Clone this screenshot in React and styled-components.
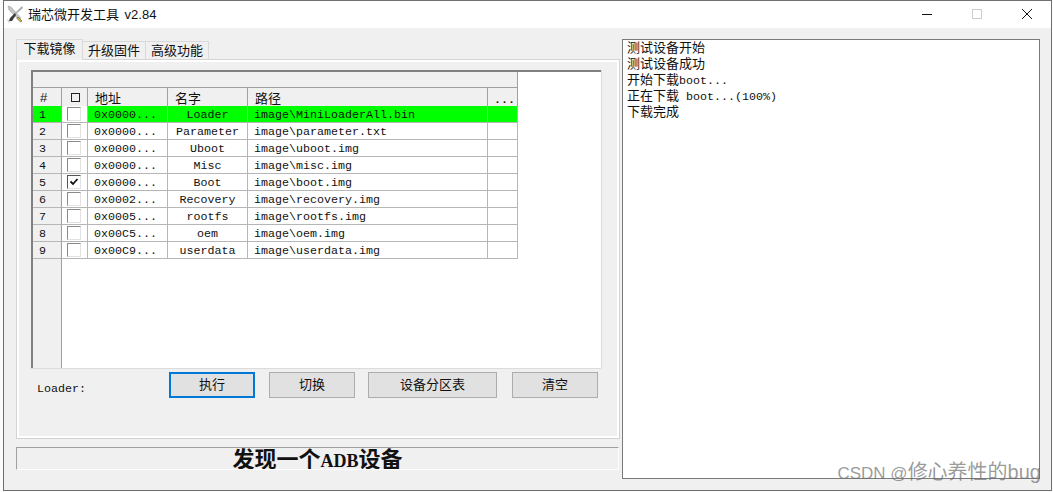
import styled, { createGlobalStyle } from "styled-components";

const GlobalStyle = createGlobalStyle`
  html, body { margin: 0; padding: 0; background: #fbfbfb; }
  body { width: 1053px; height: 492px; overflow: hidden; font-family: "Liberation Sans", "Noto Sans CJK SC", sans-serif; }
`;

const Win = styled.div`
  position: relative;
  box-sizing: border-box;
  margin-left: 3px;
  width: 1049px;
  height: 491px;
  border: 1px solid #6f6f6f;
  background: #f0f0f0;
  display: flex;
  flex-direction: column;
`;

const TitleBar = styled.div`
  box-sizing: border-box;
  height: 27px;
  flex: none;
  background: #fff;
  display: flex;
  align-items: center;
  padding: 0 0 2px 3px;
  color: #111;
  font-size: 13px;
`;

const TitleText = styled.span`
  margin-left: 5px;
  flex: 1;
  word-spacing: 2px;
`;

const WinButton = styled.div`
  box-sizing: border-box;
  width: 50px;
  padding-left: 2px;
  display: flex;
  justify-content: center;
`;

const Body = styled.div`
  flex: 1;
  display: flex;
  padding: 11px 11px 0 12px;
  gap: 2px;
`;

const LeftCol = styled.div`
  width: 604px;
  display: flex;
  flex-direction: column;
`;

const Tabs = styled.div`
  display: flex;
  height: 20px;
  align-items: flex-end;
`;

const Tab = styled.div`
  box-sizing: border-box;
  width: ${(p) => p.$w}px;
  height: ${(p) => (p.$active ? 21 : 18)}px;
  margin-bottom: ${(p) => (p.$active ? -1 : 0)}px;
  background: #f0f0f0;
  border: 1px solid #d9d9d9;
  border-bottom: none;
  border-left: ${(p) => (p.$active ? "1px solid #d9d9d9" : "none")};
  text-align: center;
  font-size: 13px;
  line-height: ${(p) => (p.$active ? 18 : 17)}px;
  color: #111;
  position: relative;
  z-index: ${(p) => (p.$active ? 1 : 0)};
`;

const Panel = styled.div`
  box-sizing: border-box;
  height: 380px;
  border: 1px solid #d4d4d4;
  box-shadow: inset 0 0 0 2px #fff;
  padding: 10px 16px 0 14px;
  display: flex;
  flex-direction: column;
`;

const GridBox = styled.div`
  box-sizing: border-box;
  height: 298px;
  width: 570px;
  background: #fff;
  border-top: 2px solid #808080;
  border-left: 2px solid #808080;
  display: flex;
  flex-direction: column;
  box-shadow: 0 1px 0 #dcdcdc, 1px 0 0 #dcdcdc;
`;

const TopBand = styled.div`
  box-sizing: border-box;
  height: 16px;
  width: 485px;
  flex: none;
  background: #f0f0f0;
  border-bottom: 1px solid #a0a0a0;
  border-right: 1px solid #a0a0a0;
`;

const Row = styled.div`
  display: grid;
  grid-template-columns: 29px 26px 80px 80px 240px 30px;
  width: 485px;
  height: 17px;
  margin-bottom: ${(p) => (p.$head ? 1 : 0)}px;
  flex: none;
`;

const HeadCell = styled.div`
  box-sizing: border-box;
  background: #f0f0f0;
  border-right: 1px solid #a0a0a0;
  border-bottom: 1px solid #a0a0a0;
  padding: 0 0 2px ${(p) => p.$pad ?? 7}px;
  display: flex;
  align-items: center;
  font-size: 13px;
  color: #111;
`;

const HeadBox = styled.span`
  width: 7px;
  height: 7px;
  margin-left: 2px;
  border: 1px solid #222;
`;

const Dots = styled.span`
  font-family: "Liberation Mono", monospace;
  font-size: 11.67px;
  margin-top: 4px;
  font-weight: bold;
`;

const Cell = styled.div`
  box-sizing: border-box;
  background: ${(p) => p.$bg};
  border-right: 1px solid ${(p) => p.$line || "#b6b6b6"};
  border-bottom: 1px solid #b6b6b6;
  font-family: "Liberation Mono", monospace;
  font-size: 11.67px;
  line-height: 18px;
  color: #111;
  white-space: nowrap;
  overflow: hidden;
  padding: 0 6px;
  text-align: ${(p) => p.$align || "left"};
`;

const CheckCell = styled(Cell)`
  padding: 1px 0 0 5px;
`;

const Check = styled.span`
  box-sizing: border-box;
  display: block;
  width: 14px;
  height: 14px;
  background: #fff;
  border: 1px solid #e2e2e2;
  border-top-color: ${(p) => (p.$on ? "#555" : "#8a8a8a")};
  border-left-color: ${(p) => (p.$on ? "#555" : "#8a8a8a")};
`;

const FixedFill = styled.div`
  flex: 1;
  width: 28px;
  background: #f0f0f0;
  border-right: 1px solid #a0a0a0;
`;

const ActionRow = styled.div`
  display: flex;
  align-items: flex-start;
  margin-top: 4px;
  padding-left: 6px;
`;

const LoaderLabel = styled.span`
  width: 132px;
  font-family: "Liberation Mono", monospace;
  font-size: 11.67px;
  line-height: 16px;
  padding-top: 9px;
  color: #111;
`;

const Btn = styled.button`
  box-sizing: border-box;
  height: 26px;
  width: ${(p) => p.$w}px;
  margin-left: ${(p) => p.$gap || 0}px;
  padding: 0 0 4px;
  background: #e1e1e1;
  border: ${(p) => (p.$focus ? "2px solid #0078d7" : "1px solid #adadad")};
  border-radius: 0;
  font-family: "Liberation Sans", "Noto Sans CJK SC", sans-serif;
  font-size: 13px;
  color: #111;
`;

const StatusBar = styled.div`
  box-sizing: border-box;
  margin-top: 8px;
  width: 603px;
  height: 23px;
  border-top: 1px solid #a0a0a0;
  border-left: 1px solid #a0a0a0;
  border-right: 1px solid #fff;
  border-bottom: 1px solid #fff;
  overflow: hidden;
  text-align: center;
  font-family: "Liberation Serif", "Noto Sans CJK SC", serif;
  font-weight: bold;
  font-size: 22px;
  line-height: 24px;
  color: #111;
`;

const StatusLatin = styled.span`
  font-size: 18px;
`;

const LogBox = styled.div`
  box-sizing: border-box;
  width: 418px;
  height: 440px;
  background: #fff;
  border: 1px solid #7a7a7a;
  padding: 0 4px;
  font-size: 13px;
  color: #111;
`;

const LogLine = styled.div`
  height: 16px;
  line-height: 16px;
  white-space: pre;
`;

const Mono = styled.span`
  font-family: "Liberation Mono", monospace;
  font-size: 11.67px;
  line-height: 1;
`;

const Watermark = styled.div`
  position: absolute;
  right: 10px;
  bottom: 5px;
  font-size: 17px;
  line-height: 22px;
  color: rgba(110, 110, 110, 0.7);
  white-space: nowrap;
`;

const WatermarkTail = styled.span`
  font-size: 20px;
  line-height: 1;
`;

const rows = [
  ["1", false, "0x0000...", "Loader", "image\\MiniLoaderAll.bin"],
  ["2", false, "0x0000...", "Parameter", "image\\parameter.txt"],
  ["3", false, "0x0000...", "Uboot", "image\\uboot.img"],
  ["4", false, "0x0000...", "Misc", "image\\misc.img"],
  ["5", true, "0x0000...", "Boot", "image\\boot.img"],
  ["6", false, "0x0002...", "Recovery", "image\\recovery.img"],
  ["7", false, "0x0005...", "rootfs", "image\\rootfs.img"],
  ["8", false, "0x00C5...", "oem", "image\\oem.img"],
  ["9", false, "0x00C9...", "userdata", "image\\userdata.img"],
];

const ToolsIcon = () => (
  <svg width="16" height="18" viewBox="0 0 16 18">
    <path d="M1 1 L4 2 L14 13 L12 15 L2 5 Z" fill="#c6c6c6" stroke="#a0a0a0" strokeWidth="0.6" />
    <path d="M15 1 L8 8 L9 9 L16 3 Z" fill="#a8a8a8" />
    <path d="M8 8 L3 13 L2 16 L5 16 L9 10 Z" fill="#3a3a3a" />
    <path d="M11 12 L15 16 L13.5 17 L10 13.5 Z" fill="#d8b93a" stroke="#333" strokeWidth="0.5" />
    <path d="M0 14 L4 17 L1 17.5 Z" fill="#d0d0d0" />
  </svg>
);

const App = () => {
  return (
    <>
      <GlobalStyle />
      <Win>
        <TitleBar>
          <ToolsIcon />
          <TitleText>瑞芯微开发工具 v2.84</TitleText>
          <WinButton>
            <svg width="10" height="10" viewBox="0 0 10 10"><path d="M0 5.5H10" stroke="#111" /></svg>
          </WinButton>
          <WinButton>
            <svg width="10" height="10" viewBox="0 0 10 10"><rect x=".5" y=".5" width="9" height="9" fill="none" stroke="#ccc" /></svg>
          </WinButton>
          <WinButton>
            <svg width="10" height="10" viewBox="0 0 10 10"><path d="M0 0L10 10M10 0L0 10" stroke="#111" /></svg>
          </WinButton>
        </TitleBar>
        <Body>
          <LeftCol>
            <Tabs>
              <Tab $w={67} $active>下载镜像</Tab>
              <Tab $w={63}>升级固件</Tab>
              <Tab $w={63}>高级功能</Tab>
            </Tabs>
            <Panel>
              <GridBox>
                <TopBand />
                <Row $head>
                  <HeadCell>#</HeadCell>
                  <HeadCell $pad={7}><HeadBox /></HeadCell>
                  <HeadCell>地址</HeadCell>
                  <HeadCell>名字</HeadCell>
                  <HeadCell>路径</HeadCell>
                  <HeadCell $pad={6}><Dots>...</Dots></HeadCell>
                </Row>
                {rows.map(([num, checked, addr, name, path], i) => {
                  const bg = i === 0 ? "#00ff00" : "#fff";
                  return (
                    <Row key={num}>
                      <Cell $bg={i === 0 ? bg : "#f0f0f0"} $line="#a0a0a0">{num}</Cell>
                      <CheckCell $bg="#fff">
                        <Check $on={checked}>
                          {checked && (
                            <svg width="12" height="12" viewBox="0 0 12 12" style={{ display: "block" }}>
                              <path d="M2.5 5.5L5 8L9.5 3" fill="none" stroke="#111" strokeWidth="1.8" />
                            </svg>
                          )}
                        </Check>
                      </CheckCell>
                      <Cell $bg={bg}>{addr}</Cell>
                      <Cell $bg={bg} $align="center">{name}</Cell>
                      <Cell $bg={bg}>{path}</Cell>
                      <Cell $bg={bg} />
                    </Row>
                  );
                })}
                <FixedFill />
              </GridBox>
              <ActionRow>
                <LoaderLabel>Loader:</LoaderLabel>
                <Btn $w={86} $focus>执行</Btn>
                <Btn $w={86} $gap={14}>切换</Btn>
                <Btn $w={129} $gap={13}>设备分区表</Btn>
                <Btn $w={86} $gap={15}>清空</Btn>
              </ActionRow>
            </Panel>
            <StatusBar>发现一个<StatusLatin>ADB</StatusLatin>设备</StatusBar>
          </LeftCol>
          <LogBox>
            <LogLine>测试设备开始</LogLine>
            <LogLine>测试设备成功</LogLine>
            <LogLine>开始下载<Mono>boot...</Mono></LogLine>
            <LogLine>正在下载<Mono> boot...(100%)</Mono></LogLine>
            <LogLine>下载完成</LogLine>
          </LogBox>
        </Body>
        <Watermark>CSDN @<WatermarkTail>修心养性的bug</WatermarkTail></Watermark>
      </Win>
    </>
  );
};

export default App;
